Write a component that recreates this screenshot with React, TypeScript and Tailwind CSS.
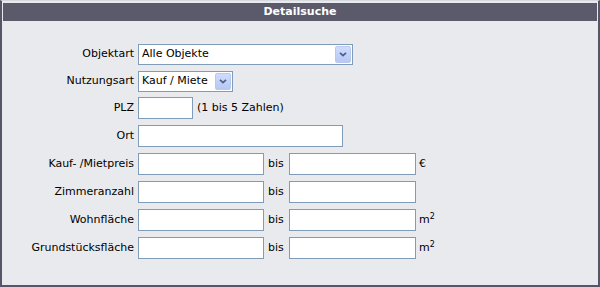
import type { ReactElement, ReactNode } from "react";

const font = { fontFamily: "Tahoma, 'DejaVu Sans', Verdana, sans-serif" };

function Label({ children }: { children: ReactNode }): ReactElement {
  return <span className="w-[136px] shrink-0 pr-[4px] text-right text-[11px] text-[#000]">{children}</span>;
}

function Box({ w }: { w: string }): ReactElement {
  return <div className={`h-[22px] shrink-0 border border-[#7f9db9] bg-white ${w}`} />;
}

function Select({ value, w }: { value: string; w: string }): ReactElement {
  return (
    <div className={`flex h-[21px] shrink-0 items-center border border-[#7f9db9] bg-white pl-[3px] pr-[1px] ${w}`}>
      <span className="flex-1 text-[11px] text-black">{value}</span>
      <span className="flex h-[17px] w-[16px] items-center justify-center rounded-[2px] border border-[#b9c9ef] bg-gradient-to-b from-[#cfdcfd] to-[#b6c8f4]">
        <svg width="8" height="5" viewBox="0 0 8 5">
          <path d="M1 0.8 L4 3.6 L7 0.8" fill="none" stroke="#4d6185" strokeWidth="1.8" />
        </svg>
      </span>
    </div>
  );
}

function Unit({ children }: { children: ReactNode }): ReactElement {
  return <span className="ml-[3px] text-[11px]">{children}</span>;
}

function RangeRow({ label, unit, mt }: { label: string; unit?: ReactNode; mt: string }): ReactElement {
  return (
    <div className={`flex items-center ${mt}`}>
      <Label>{label}</Label>
      <Box w="w-[126px]" />
      <span className="w-[25px] pl-[4px] text-left text-[11px]">bis</span>
      <Box w="w-[127px]" />
      {unit && <Unit>{unit}</Unit>}
    </div>
  );
}

export default function App(): ReactElement {
  return (
    <div
      style={font}
      className="flex h-[287px] w-[600px] flex-col border-x-2 border-b-2 border-t border-[#565668] border-t-[#d8d8e0] bg-[#e9eaee] text-black"
    >
      <div className="mx-[1px] mt-[2px] flex h-[18px] items-center justify-center bg-[#5a5a6b] text-[11px] font-bold text-white">
        Detailsuche
      </div>
      <div className="flex flex-col">
        <div className="mt-[23px] flex items-center">
          <Label>Objektart</Label>
          <Select value="Alle Objekte" w="w-[215px]" />
        </div>
        <div className="mt-[6px] flex items-center">
          <Label>Nutzungsart</Label>
          <Select value="Kauf / Miete" w="w-[95px]" />
        </div>
        <div className="mt-[5px] flex items-center">
          <Label>PLZ</Label>
          <Box w="w-[55px]" />
          <span className="ml-[4px] text-[11px]">(1 bis 5 Zahlen)</span>
        </div>
        <div className="mt-[6px] flex items-center">
          <Label>Ort</Label>
          <Box w="w-[205px]" />
        </div>
        <RangeRow label="Kauf- /Mietpreis" unit="€" mt="mt-[6px]" />
        <RangeRow label="Zimmeranzahl" mt="mt-[6px]" />
        <RangeRow
          label="Wohnfläche"
          mt="mt-[6px]"
          unit={
            <>
              m<sup className="text-[8px]">2</sup>
            </>
          }
        />
        <RangeRow
          label="Grundstücksfläche"
          mt="mt-[6px]"
          unit={
            <>
              m<sup className="text-[8px]">2</sup>
            </>
          }
        />
      </div>
    </div>
  );
}
